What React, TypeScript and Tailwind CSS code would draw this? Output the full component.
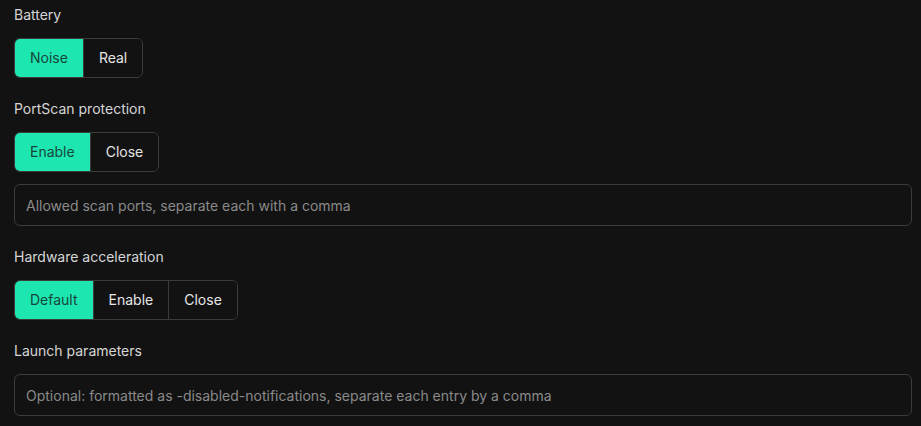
import React, { useState } from "react";

function Segmented({ options, initial }: { options: string[]; initial: number }) {
  const [active, setActive] = useState(initial);
  return (
    <div className="flex w-fit h-[40px] rounded-[6px] border border-[#3c3c3c] overflow-hidden">
      {options.map((o, i) => (
        <button
          key={o}
          onClick={() => setActive(i)}
          className={
            "px-[15px] text-[14px] leading-none " +
            (i > 0 ? "border-l border-[#3c3c3c] " : "") +
            (i === active
              ? "bg-[#1ee6b0] text-[#17463a] "
              : "bg-[#121212] text-[#e6e6e6] ")
          }
        >
          {o}
        </button>
      ))}
    </div>
  );
}

function Label({ children }: { children: React.ReactNode }) {
  return <div className="text-[14px] leading-[20px] text-[#d6d6d6]">{children}</div>;
}

function TextInput({ placeholder }: { placeholder: string }) {
  return (
    <input
      placeholder={placeholder}
      className="w-full h-[42px] rounded-[6px] border border-[#3c3c3c] bg-[#121212] px-[11px] text-[14px] text-[#e6e6e6] placeholder:text-[#8a8a8a] outline-none"
    />
  );
}

export default function App() {
  return (
    <div
      className="min-h-[426px] bg-[#121212] pl-[14px] pr-[9px] pt-[5px] flex flex-col"
      style={{ fontFamily: "Inter, 'Noto Sans', sans-serif" }}
    >
      <Label>Battery</Label>
      <div className="mt-[13px]">
        <Segmented options={["Noise", "Real"]} initial={0} />
      </div>
      <div className="mt-[21px]">
        <Label>PortScan protection</Label>
      </div>
      <div className="mt-[13px]">
        <Segmented options={["Enable", "Close"]} initial={0} />
      </div>
      <div className="mt-[12px]">
        <TextInput placeholder="Allowed scan ports, separate each with a comma" />
      </div>
      <div className="mt-[21px]">
        <Label>Hardware acceleration</Label>
      </div>
      <div className="mt-[13px]">
        <Segmented options={["Default", "Enable", "Close"]} initial={0} />
      </div>
      <div className="mt-[21px]">
        <Label>Launch parameters</Label>
      </div>
      <div className="mt-[13px]">
        <TextInput placeholder="Optional: formatted as -disabled-notifications, separate each entry by a comma" />
      </div>
    </div>
  );
}
